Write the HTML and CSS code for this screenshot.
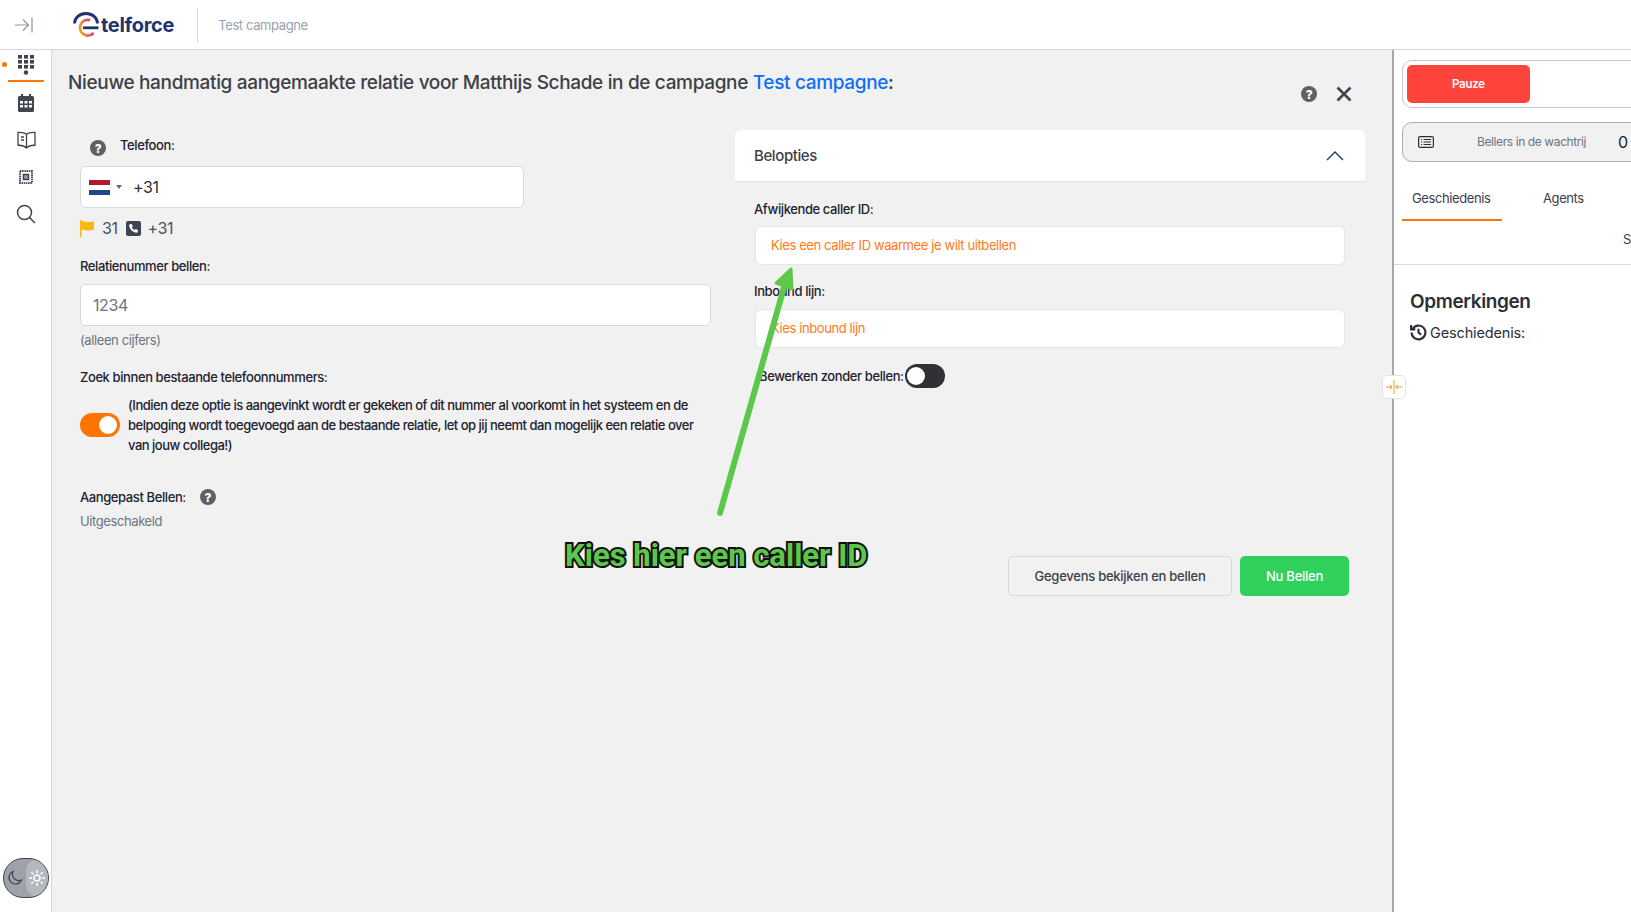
FILE: index.html
```html
<!DOCTYPE html>
<html lang="nl">
<head>
    <meta charset="UTF-8">
    <title>Telforce</title>
    <link rel="stylesheet" href="styles.css">
</head>
<body>
    <header class="topbar">
        <div class="topbar-toggle">
            <svg width="20" height="18" viewBox="0 0 20 18" fill="none" stroke="#8d96a3" stroke-width="1.2"><path d="M1 9h13M9 3.500 14.500 9 9 14.500M18 1.500v15"/></svg>
        </div>
        <div class="logo">
            <svg width="28" height="26" viewBox="0 0 28 26" fill="none" stroke-width="2.800">
                <defs><linearGradient id="logoGrad" x1="0" y1="0.500" x2="1" y2="0.200"><stop offset="0" stop-color="#f59a23"/><stop offset="1" stop-color="#d6287f"/></linearGradient></defs>
                <path d="M2.500 11.500a11.500 10 0 0 1 23 0" stroke="#1f3370"/>
                <path d="M18 8.200A7.800 7.800 0 1 0 21.500 21" stroke="url(#logoGrad)"/>
                <path d="M11 15.800h15.500" stroke="#1f3370"/>
            </svg>
            <span class="logo-text">telforce</span>
        </div>
        <div class="topbar-title">Test campagne</div>
    </header>

    <div class="layout">
        <nav class="sidebar">
            <div class="nav-item nav-active">
                <span class="nav-dot"></span>
                <svg width="17" height="20" viewBox="0 0 17 20" fill="#3f4450"><rect x="0" y="0" width="4" height="3.600" /><rect x="6" y="0" width="4" height="3.600" /><rect x="12" y="0" width="4" height="3.600" /><rect x="0" y="5" width="4" height="3.600" /><rect x="6" y="5" width="4" height="3.600" /><rect x="12" y="5" width="4" height="3.600" /><rect x="0" y="10" width="4" height="3.600" /><rect x="6" y="10" width="4" height="3.600" /><rect x="12" y="10" width="4" height="3.600" /><circle cx="8" cy="17.500" r="2.200"/></svg>
            </div>
            <div class="nav-item">
                <svg width="16" height="18" viewBox="0 0 16 18"><path fill="#3f4450" d="M3 0h2v2h6V0h2v2h1.500A1.500 1.500 0 0 1 16 3.500v13a1.500 1.500 0 0 1-1.500 1.500h-13A1.500 1.500 0 0 1 0 16.500v-13A1.500 1.500 0 0 1 1.500 2H3z"/><path fill="#fff" d="M2 7h3v2.500H2zM6.500 7h3v2.500h-3zM11 7h3v2.500h-3zM2 11h3v2.500H2zM6.500 11h3v2.500h-3zM11 11h3v2.500h-3z"/></svg>
            </div>
            <div class="nav-item">
                <svg width="19" height="18" viewBox="0 0 19 18" fill="none" stroke="#3f4450" stroke-width="1.300"><path d="M9.500 3.500C8 2 5 1.300 1 1.500v12.800c4-.2 6.500.5 8.500 2.700 2-2.200 4.500-2.900 8.500-2.700V1.500c-4-.2-7 .5-8.500 2zM9.500 3.500V17M4 6h3M4 9h3"/></svg>
            </div>
            <div class="nav-item">
                <svg width="14" height="14" viewBox="0 0 14 14" fill="none"><rect x="1" y="1" width="12" height="12" stroke="#4a4f5c" stroke-width="2" stroke-dasharray="1.500 .7"/><rect x="3" y="3" width="8" height="8" fill="#fff"/><rect x="4.500" y="4.500" width="5" height="5" fill="#9a9fa8" stroke="#3f4450" stroke-width="1.500"/></svg>
            </div>
            <div class="nav-item">
                <svg width="20" height="20" viewBox="0 0 20 20" fill="none" stroke="#3f4450" stroke-width="1.500"><circle cx="8.500" cy="8.500" r="7"/><path d="m13.500 13.500 5.500 5.500"/></svg>
            </div>
            <div class="theme-switch">
                <span class="theme-dark">
                    <svg width="16" height="16" viewBox="0 0 16 16" fill="none" stroke="#3f4450" stroke-width="1.200"><path d="M6 1.500a6.500 6.500 0 1 0 8.500 8.500A6.500 6.500 0 0 1 6 1.500z"/></svg>
                </span>
                <span class="theme-light">
                    <svg width="16" height="16" viewBox="0 0 16 16" fill="none" stroke="#fff" stroke-width="1.500"><circle cx="8" cy="8" r="3"/><path d="M8 0v3M8 13v3M0 8h3M13 8h3M2.300 2.300l2 2M11.700 11.700l2 2M2.300 13.700l2-2M11.700 4.300l2-2"/></svg>
                </span>
            </div>
        </nav>

        <main class="content">
            <h1 class="page-title">Nieuwe handmatig aangemaakte relatie voor Matthijs Schade in de campagne <a class="title-link">Test campagne</a>:</h1>
            <div class="title-actions">
                <span class="help">?</span>
                <svg width="16" height="16" viewBox="0 0 16 16" stroke="#3f4450" stroke-width="2.600"><path d="m1.500 1.500 13 13M14.500 1.500l-13 13"/></svg>
            </div>

            <div class="columns">
                <section class="col-left">
                    <div class="phone-label">
                        <span class="help">?</span>
                        <label class="field-label">Telefoon:</label>
                    </div>
                    <div class="input phone-input">
                        <span class="flag"><i class="flag-red"></i><i class="flag-white"></i><i class="flag-blue"></i></span>
                        <span class="caret"></span>
                        <span class="phone-value">+31</span>
                    </div>
                    <div class="phone-info">
                        <svg width="15" height="17" viewBox="0 0 15 17"><path fill="#fdb913" d="M0 0h1.500v1c3 0 4 1 6.500 1s4-.5 6-.5V10c-2 0-3.500.6-6 .6S4.500 9.500 1.500 9.500V17H0z"/></svg>
                        <span>31</span>
                        <svg class="phone-square" width="15" height="15" viewBox="0 0 15 15"><rect width="15" height="15" rx="2" fill="#3f4450"/><path fill="#fff" d="M4 3.200 5.800 3l1 2.300-1 .9c.5 1.200 1.500 2.200 2.900 2.900l.9-1 2.300 1-.2 1.800c-.1.500-.5.800-1 .8C6.800 11.500 3.300 8 3.200 4.200c0-.5.300-.9.800-1z"/></svg>
                        <span>+31</span>
                    </div>

                    <label class="field-label relation-label">Relatienummer bellen:</label>
                    <div class="input relation-input">1234</div>
                    <div class="hint">(alleen cijfers)</div>

                    <label class="field-label search-label">Zoek binnen bestaande telefoonnummers:</label>
                    <div class="search-option">
                        <span class="toggle toggle-on"><i></i></span>
                        <p>(Indien deze optie is aangevinkt wordt er gekeken of dit nummer al voorkomt in het systeem en de belpoging wordt toegevoegd aan de bestaande relatie, let op jij neemt dan mogelijk een relatie over van jouw collega!)</p>
                    </div>

                    <div class="custom-label">
                        <label class="field-label">Aangepast Bellen:</label>
                        <span class="help">?</span>
                    </div>
                    <div class="custom-value">Uitgeschakeld</div>
                </section>

                <section class="col-right">
                    <div class="card-head">
                        <span>Belopties</span>
                        <svg width="18" height="10" viewBox="0 0 18 10" fill="none" stroke="#1f3a63" stroke-width="1.400"><path d="m1 9 8-8 8 8"/></svg>
                    </div>
                    <div class="card-fields">
                        <label class="field-label">Afwijkende caller ID:</label>
                        <div class="select">Kies een caller ID waarmee je wilt uitbellen</div>
                        <label class="field-label inbound-label">Inbound lijn:</label>
                        <div class="select">Kies inbound lijn</div>
                        <div class="no-call">
                            <label class="field-label">Bewerken zonder bellen:</label>
                            <span class="toggle toggle-off"><i></i></span>
                        </div>
                    </div>
                    <div class="actions">
                        <button class="btn btn-light">Gegevens bekijken en bellen</button>
                        <button class="btn btn-green">Nu Bellen</button>
                    </div>
                </section>
            </div>

            <svg class="arrow" width="100" height="262" viewBox="0 0 100 262" fill="none" stroke="#5cc84b" stroke-linecap="round" stroke-linejoin="round"><path d="M4 255 69 26" stroke-width="6"/><path d="M75 11 60 25 76 31z" fill="#5cc84b" stroke-width="3"/></svg>
            <div class="callout">Kies hier een caller ID</div>
        </main>

        <aside class="panel">
            <div class="pause-box"><button class="btn-pause">Pauze</button></div>
            <div class="queue-box">
                <svg width="16" height="12" viewBox="0 0 16 12" fill="none" stroke="#2b2f38" stroke-width="1.200"><rect x=".6" y=".6" width="14.800" height="10.800" rx="1.500"/><path d="M3 3.500h1M3 6h1M3 8.500h1M5.500 3.500H13M5.500 6H13M5.500 8.500H13"/></svg>
                <span class="queue-text">Bellers in de wachtrij</span>
                <span class="queue-count">0</span>
            </div>
            <div class="tabs">
                <span class="tab tab-active">Geschiedenis</span>
                <span class="tab">Agents</span>
            </div>
            <div class="tab-sub">S</div>
            <div class="notes">
                <h2>Opmerkingen</h2>
                <div class="history">
                    <svg width="17" height="17" viewBox="0 0 16 16" fill="none" stroke="#2b2f38" stroke-width="2"><path d="M2.500 4.500A6.500 6.500 0 1 1 1.500 8M1 1v4h4M8 4.500V8l2.500 2"/></svg>
                    <span>Geschiedenis:</span>
                </div>
            </div>
        </aside>

        <div class="splitter">
            <svg width="18" height="14" viewBox="0 0 18 14" fill="none" stroke="#f7941d" stroke-width="1"><path d="M9 0v14M1 7h6M5 5l2 2-2 2M17 7h-6M13 5l-2 2 2 2"/></svg>
        </div>
    </div>
</body>
</html>
```

FILE: styles.css
```css
* {
    box-sizing: border-box;
}
html, body {
    height: 100%;
}
body {
    margin: 0;
    overflow: hidden;
    font-family: Inter, 'Noto Sans', sans-serif;
    letter-spacing: -0.025em;
    color: #1c2230;
    background-color: #fff;
}

/* top bar */
.topbar {
    display: flex;
    align-items: center;
    height: 50px;
    border-bottom: 1px solid #d5d7db;
    background-color: #fff;
}
.topbar-toggle {
    display: flex;
    justify-content: center;
    width: 48px;
}
.logo {
    display: flex;
    align-items: center;
    margin-left: 24px;
    padding-right: 23px;
    height: 34px;
    border-right: 1px solid #d5d7db;
}
.logo-text {
    margin-left: 1px;
    font-size: 20px;
    font-weight: 700;
    letter-spacing: -0.3px;
    color: #1f3370;
}
.topbar-title {
    margin-left: 20px;
    font-size: 13px;
    letter-spacing: -0.03em;
    color: #98a2ae;
}

.layout {
    position: relative;
    display: flex;
    height: 862px;
}

/* left nav */
.sidebar {
    display: flex;
    flex-direction: column;
    width: 52px;
    border-right: 1px solid #d5d7db;
    background-color: #fff;
}
.nav-item {
    position: relative;
    display: flex;
    justify-content: center;
    align-items: center;
    width: 36px;
    height: 37px;
    margin-left: 8px;
}
.nav-active {
    height: 32px;
    margin-bottom: 2px;
    border-bottom: 2px solid #ff7300;
}
.nav-dot {
    position: absolute;
    left: -6px;
    top: 12px;
    width: 5px;
    height: 5px;
    border-radius: 50%;
    background-color: #ff7300;
}
.theme-switch {
    display: flex;
    width: 46px;
    height: 40px;
    margin: auto 0 14px 3px;
    border: 1px solid #3f4450;
    border-radius: 20px;
    overflow: hidden;
    background-color: #9ea3aa;
}
.theme-dark, .theme-light {
    display: flex;
    justify-content: center;
    align-items: center;
    flex: 1;
}
.theme-light {
    border-radius: 12px 0 0 12px;
    background-color: #b4b9c0;
}

/* main area */
.content {
    position: relative;
    width: 1342px;
    padding: 20px 0 0 16px;
    border-right: 2px solid #a8a8a8;
    background-color: #f1f1f1;
}
.page-title {
    margin: 0;
    font-size: 19px;
    line-height: 26px;
    font-weight: 500;
    letter-spacing: -0.018em;
    color: #3c4047;
}
.title-link {
    color: #0d6efd;
}
.title-actions {
    position: absolute;
    top: 36px;
    right: 40px;
    display: flex;
    align-items: center;
    gap: 19px;
}
.help {
    display: inline-flex;
    justify-content: center;
    align-items: center;
    width: 16px;
    height: 16px;
    border-radius: 50%;
    font-size: 12px;
    font-weight: 800;
    color: #fff;
    background-color: #5f6062;
}
.columns {
    display: grid;
    grid-template-columns: 631px 630px;
    column-gap: 24px;
    margin: 34px 0 0 12px;
}
.field-label {
    display: block;
    font-size: 13px;
    line-height: 18px;
    font-weight: 500;
    color: #1c2230;
}
.input {
    display: flex;
    align-items: center;
    border: 1px solid #d5dae2;
    border-radius: 6px;
    font-size: 16px;
    background-color: #fff;
}

/* left column */
.phone-label {
    display: flex;
    align-items: flex-start;
    gap: 14px;
    padding-left: 10px;
    height: 36px;
    padding-top: 6px;
}
.phone-label .help {
    margin-top: 4px;
}
.phone-input {
    width: 444px;
    height: 42px;
    padding-left: 8px;
}
.flag {
    display: flex;
    flex-direction: column;
    width: 21px;
    height: 15px;
}
.flag i {
    flex: 1;
}
.flag-red {
    background-color: #ae1c28;
}
.flag-white {
    background-color: #fff;
}
.flag-blue {
    background-color: #21468b;
}
.caret {
    margin-left: 6px;
    border-top: 4px solid #6b6b6b;
    border-left: 3px solid transparent;
    border-right: 3px solid transparent;
}
.phone-value {
    margin-left: 11px;
    color: #2b2f38;
}
.phone-info {
    display: flex;
    align-items: center;
    height: 24px;
    margin-top: 8px;
    font-size: 16px;
    color: #4a5160;
}
.phone-info span {
    margin-left: 7px;
}
.phone-square {
    margin-left: 8px;
}
.relation-label {
    margin-top: 17px;
}
.relation-input {
    width: 631px;
    height: 42px;
    margin-top: 9px;
    padding-left: 12px;
    color: #6d7480;
}
.hint {
    margin-top: 5px;
    font-size: 13px;
    line-height: 18px;
    color: #6d7480;
}
.search-label {
    margin-top: 19px;
}
.search-option {
    display: flex;
    align-items: center;
    gap: 8px;
    margin-top: 9px;
}
.search-option p {
    margin: 0;
    font-size: 13px;
    line-height: 20px;
    font-weight: 500;
    letter-spacing: -0.038em;
    color: #1c2230;
}
.toggle {
    position: relative;
    flex: none;
    display: block;
    width: 40px;
    height: 24px;
    border-radius: 12px;
}
.toggle i {
    position: absolute;
    top: 3px;
    width: 18px;
    height: 18px;
    border-radius: 50%;
    background-color: #fff;
}
.toggle-on {
    background-color: #ff7300;
}
.toggle-on i {
    right: 3px;
}
.toggle-off {
    background-color: #2f3136;
}
.toggle-off i {
    left: 2px;
}
.custom-label {
    display: flex;
    align-items: center;
    gap: 14px;
    margin-top: 33px;
}
.custom-value {
    margin-top: 6px;
    font-size: 13px;
    line-height: 18px;
    color: #6d7480;
}

/* right column */
.card-head {
    display: flex;
    justify-content: space-between;
    align-items: center;
    height: 52px;
    padding: 0 21px 0 19px;
    border-bottom: 1px solid #e1e3e6;
    border-radius: 6px 6px 0 0;
    font-size: 15px;
    font-weight: 500;
    color: #3c4047;
    background-color: #fff;
}
.card-fields {
    padding: 18px 20px 0;
}
.card-fields .field-label {
    margin-left: -1px;
}
.select {
    display: flex;
    align-items: center;
    height: 39px;
    margin-top: 8px;
    padding: 0 0 2px 15px;
    border: 1px solid #e3e5e9;
    border-radius: 6px;
    font-size: 13px;
    color: #ff7a1a;
    background-color: #fff;
}
.inbound-label {
    margin-top: 17px;
    margin-bottom: 9px;
}
.no-call {
    display: flex;
    align-items: center;
    gap: 1px;
    margin-top: 16px;
    padding-left: 5px;
}
.actions {
    display: flex;
    justify-content: flex-end;
    gap: 8px;
    margin-top: 168px;
    padding-right: 16px;
}
.btn {
    height: 40px;
    border-radius: 5px;
    font-family: inherit;
    font-size: 13px;
    font-weight: 500;
    letter-spacing: -0.02em;
}
.btn-light {
    width: 224px;
    border: 1px solid #d5d7db;
    color: #3c4047;
    background-color: #f1f1f1;
}
.btn-green {
    width: 109px;
    border: none;
    color: #fff;
    background-color: #2fd05c;
}

/* annotation drawn over the form */
.arrow {
    position: absolute;
    left: 664px;
    top: 208px;
}
.callout {
    position: absolute;
    left: 513px;
    top: 486px;
    font-family: Roboto, sans-serif;
    font-size: 31px;
    line-height: 40px;
    font-weight: 700;
    letter-spacing: 0;
    white-space: nowrap;
    color: #5cc84b;
    -webkit-text-stroke: 4px #111;
    paint-order: stroke fill;
}

/* right panel */
.panel {
    width: 237px;
    overflow: hidden;
    background-color: #fff;
}
.pause-box {
    width: 260px;
    height: 48px;
    margin: 10px 0 0 8px;
    padding: 4px;
    border: 1px solid #c8c8c8;
    border-radius: 10px;
}
.btn-pause {
    width: 123px;
    height: 38px;
    border: none;
    border-radius: 5px;
    font-family: inherit;
    font-size: 11.500px;
    font-weight: 600;
    letter-spacing: -0.02em;
    color: #fff;
    background-color: #ff443b;
}
.queue-box {
    display: flex;
    align-items: center;
    width: 260px;
    height: 40px;
    margin: 14px 0 0 8px;
    padding-left: 15px;
    border: 1px solid #aeaeae;
    border-radius: 10px;
    background-color: #f1f1f1;
}
.queue-text {
    margin-left: 43px;
    width: 141px;
    font-size: 12px;
    line-height: 14px;
    padding-bottom: 1px;
    color: #6d7480;
}
.queue-count {
    font-size: 16px;
}
.tabs {
    display: flex;
    margin: 23px 0 0 8px;
    white-space: nowrap;
}
.tab {
    display: block;
    font-size: 13px;
    line-height: 18px;
    padding: 4px 10px 12px;
    color: #3c4047;
}
.tab-active {
    width: 100px;
    border-bottom: 2px solid #ff7300;
}
.tab:not(.tab-active) {
    margin-left: 31px;
}
.tab-sub {
    height: 44px;
    padding: 10px 0 0 229px;
    border-bottom: 1px solid #d5dae2;
    font-size: 13px;
    color: #3c4047;
}
.notes {
    padding: 24px 0 0 16px;
}
.notes h2 {
    margin: 0;
    font-size: 19px;
    line-height: 26px;
    font-weight: 600;
    letter-spacing: -0.02em;
    color: #2b2f38;
}
.history {
    display: flex;
    align-items: center;
    gap: 3px;
    margin-top: 9px;
    font-size: 14.500px;
    letter-spacing: -0.01em;
    color: #2b2f38;
}

/* handle on the panel edge */
.splitter {
    position: absolute;
    left: 1382px;
    top: 325px;
    display: flex;
    justify-content: center;
    align-items: center;
    width: 24px;
    height: 24px;
    border: 1px solid #dfe2e6;
    border-radius: 5px;
    background-color: #fff;
}
```
